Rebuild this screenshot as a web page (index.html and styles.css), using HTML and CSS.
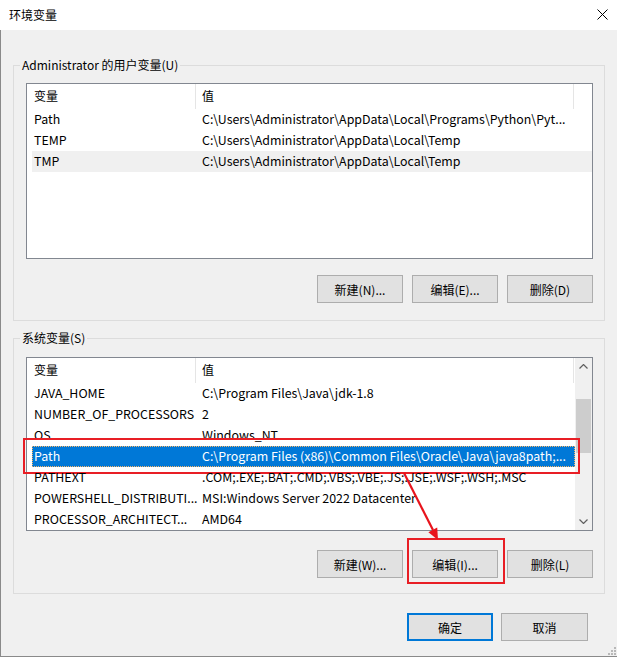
FILE: index.html
```html
<!DOCTYPE html>
<html lang="zh-CN">
<head>
<meta charset="utf-8">
<title>环境变量</title>
<link rel="stylesheet" href="styles.css">
</head>
<body>
<div class="window">
  <div class="titlebar">
    <span class="title">环境变量</span>
    <svg class="close" width="11" height="11" viewBox="0 0 11 11"><path d="M0.5 0.5 L10.5 10.5 M10.5 0.5 L0.5 10.5" stroke="#000" stroke-width="1" fill="none"/></svg>
  </div>
  <div class="content">
    <fieldset class="group group-user">
      <legend>Administrator 的用户变量(U)</legend>
      <div class="list list-user">
        <div class="list-main">
          <div class="list-head">
            <div class="hcell c1">变量</div>
            <div class="hcell c2">值</div>
          </div>
          <div class="row"><div class="cell c1">Path</div><div class="cell c2">C:\Users\Administrator\AppData\Local\Programs\Python\Pyt...</div></div>
          <div class="row"><div class="cell c1">TEMP</div><div class="cell c2">C:\Users\Administrator\AppData\Local\Temp</div></div>
          <div class="row row-hover"><div class="cell c1">TMP</div><div class="cell c2">C:\Users\Administrator\AppData\Local\Temp</div></div>
        </div>
      </div>
      <div class="btns">
        <button class="btn">新建(N)...</button>
        <button class="btn">编辑(E)...</button>
        <button class="btn">删除(D)</button>
      </div>
    </fieldset>

    <fieldset class="group group-sys">
      <legend>系统变量(S)</legend>
      <div class="list list-sys">
        <div class="list-main">
          <div class="list-head">
            <div class="hcell c1">变量</div>
            <div class="hcell c2">值</div>
          </div>
          <div class="row"><div class="cell c1">JAVA_HOME</div><div class="cell c2">C:\Program Files\Java\jdk-1.8</div></div>
          <div class="row"><div class="cell c1">NUMBER_OF_PROCESSORS</div><div class="cell c2">2</div></div>
          <div class="row"><div class="cell c1">OS</div><div class="cell c2">Windows_NT</div></div>
          <div class="row row-sel"><div class="cell c1">Path</div><div class="cell c2">C:\Program Files (x86)\Common Files\Oracle\Java\java8path;...</div><span class="mark mark-row"></span></div>
          <div class="row"><div class="cell c1">PATHEXT</div><div class="cell c2">.COM;.EXE;.BAT;.CMD;.VBS;.VBE;.JS;.JSE;.WSF;.WSH;.MSC</div></div>
          <div class="row"><div class="cell c1">POWERSHELL_DISTRIBUTI...</div><div class="cell c2">MSI:Windows Server 2022 Datacenter</div></div>
          <div class="row"><div class="cell c1">PROCESSOR_ARCHITECT...</div><div class="cell c2">AMD64</div></div>
        </div>
        <div class="scrollbar">
          <div class="sb-btn"><svg width="9" height="5" viewBox="0 0 9 5"><path d="M0.5 4.5 L4.5 0.5 L8.5 4.5" stroke="#606060" stroke-width="1.2" fill="none"/></svg></div>
          <div class="sb-track"><div class="sb-thumb"></div></div>
          <div class="sb-btn"><svg width="9" height="5" viewBox="0 0 9 5"><path d="M0.5 0.5 L4.5 4.5 L8.5 0.5" stroke="#606060" stroke-width="1.2" fill="none"/></svg></div>
        </div>
      </div>
      <div class="btns">
        <button class="btn">新建(W)...</button>
        <div class="btn-wrap"><button class="btn">编辑(I)...</button><span class="mark mark-btn"></span></div>
        <button class="btn">删除(L)</button>
      </div>
    </fieldset>

    <div class="footer">
      <button class="btn btn-default">确定</button>
      <button class="btn btn-cancel">取消</button>
    </div>
    <svg class="grip" width="10" height="10" viewBox="0 0 10 10">
      <rect x="8" y="2" width="2" height="2" fill="#b8b8b8"/>
      <rect x="5" y="5" width="2" height="2" fill="#b8b8b8"/>
      <rect x="8" y="5" width="2" height="2" fill="#b8b8b8"/>
      <rect x="2" y="8" width="2" height="2" fill="#b8b8b8"/>
      <rect x="5" y="8" width="2" height="2" fill="#b8b8b8"/>
      <rect x="8" y="8" width="2" height="2" fill="#b8b8b8"/>
    </svg>
  </div>
  <svg class="annot" width="617" height="658" viewBox="0 0 617 658">
    <line x1="404" y1="473" x2="433" y2="530" stroke="#e8141c" stroke-width="2.2"/>
    <polygon points="438,540 437.2,527.6 428.4,532.2" fill="#e8141c"/>
  </svg>
</div>
</body>
</html>
```

FILE: styles.css
```css
* { box-sizing: border-box; }

html, body {
  margin: 0;
  background: #ffffff;
}

body {
  font-family: "Noto Sans CJK SC", "Noto Sans", sans-serif;
  font-size: 12px;
  color: #000;
}

.window {
  position: relative;
  width: 617px;
  height: 657px;
  display: flex;
  flex-direction: column;
}

.titlebar {
  height: 30px;
  flex: none;
  display: flex;
  align-items: center;
  justify-content: space-between;
  padding: 0 9px 0 9px;
  background: #fff;
}

.title {
  line-height: 16px;
}

.close {
  margin-top: -2px;
}

.content {
  position: relative;
  flex: 1;
  background: #f0f0f0;
  border-left: 1px solid #8a8a8a;
  border-bottom: 1px solid #8a8a8a;
  padding: 27px 12px 0 12px;
  display: flex;
  flex-direction: column;
}

.group {
  margin: 0;
  min-width: 0;
  border: 1px solid #dcdcdc;
  padding: 10px 11px 17px 12px;
}

.group legend {
  padding: 0 2px;
  margin-left: -6px;
  line-height: 16px;
}

.group-sys {
  margin-top: 9px;
  padding-top: 11px;
  padding-bottom: 15px;
}

.list {
  display: flex;
  background: #fff;
  border: 1px solid #828790;
}

.list-user { height: 176px; }
.list-sys { height: 174px; }

.list-main {
  flex: 1;
  min-width: 0;
  padding-left: 5px;
  display: flex;
  flex-direction: column;
}

.list-head {
  flex: none;
  display: flex;
  height: 25px;
}

.hcell {
  line-height: 23px;
  border-right: 1px solid #e5e5e5;
  white-space: nowrap;
  overflow: hidden;
}

.c1 {
  width: 164px;
  flex: none;
  padding-left: 2px;
}

.c2 {
  width: 378px;
  flex: none;
  padding-left: 6px;
}

.row {
  position: relative;
  flex: none;
  display: flex;
  align-items: flex-start;
  height: 21px;
  white-space: nowrap;
}

.cell {
  font-size: 12.4px;
  line-height: 20px;
}

.row .c2 {
  overflow: hidden;
}

.row-hover {
  background: #f0f0f0;
}

.row-sel {
  background: #0078d7;
  color: #fff;
  outline: 1px dotted #f7b56a;
  outline-offset: -1px;
}

.scrollbar {
  flex: none;
  width: 17px;
  background: #f0f0f0;
  display: flex;
  flex-direction: column;
}

.sb-btn {
  height: 17px;
  flex: none;
  display: flex;
  align-items: center;
  justify-content: center;
}

.sb-track {
  flex: 1;
  padding: 24px 1px 0 1px;
}

.sb-thumb {
  height: 54px;
  background: #cdcdcd;
}

.btns {
  display: flex;
  justify-content: flex-end;
  gap: 9px;
  margin-top: 16px;
}

.group-sys .btns {
  margin-top: 19px;
}

.btn {
  width: 86px;
  height: 28px;
  padding: 0;
  background: #e1e1e1;
  border: 1px solid #adadad;
  font-family: inherit;
  font-size: 12px;
  color: #000;
}

.btn-wrap {
  position: relative;
  display: flex;
}

.mark {
  position: absolute;
  border: 2px solid #e81e25;
  pointer-events: none;
}

.mark-row {
  top: -8px;
  left: -9px;
  right: -5px;
  bottom: -7px;
}

.mark-btn {
  top: -12px;
  left: -5px;
  right: -7px;
  bottom: -6px;
}

.footer {
  display: flex;
  justify-content: flex-end;
  gap: 8px;
  margin-top: 19px;
  padding-right: 17px;
}

.btn-default {
  border: 2px solid #0078d7;
}

.btn-cancel {
  width: 87px;
}

.grip {
  position: absolute;
  right: 1px;
  bottom: 1px;
}

.annot {
  position: absolute;
  left: 0;
  top: 0;
  pointer-events: none;
}
```
